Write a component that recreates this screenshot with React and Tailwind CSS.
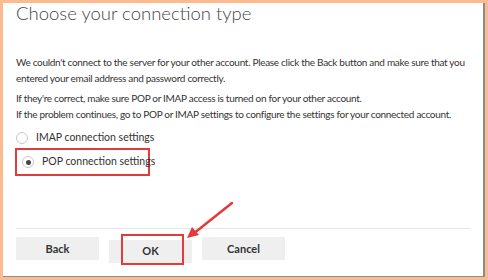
import React from 'react';

const Radio = ({ label, checked }) => (
  <div className="flex items-center h-[24px] whitespace-nowrap">
    <span className="w-[12px] h-[12px] rounded-full border border-[#c8c8c8] bg-white flex items-center justify-center shrink-0">
      {checked && <span className="w-[5px] h-[5px] rounded-full bg-[#444]"></span>}
    </span>
    <span className="ml-[8px] text-[10.5px] text-[#333]">{label}</span>
  </div>
);

const Btn = ({ children }) => (
  <button className="w-[83px] h-[23px] bg-[#efefef] text-[11px] font-bold text-[#333]">
    {children}
  </button>
);

const App = () => {
  return (
    <div className="w-[488px] h-[280px] bg-[#fbbb8f] p-[3px]" style={{ fontFamily: 'Lato, "Noto Sans", sans-serif' }}>
      <div className="relative w-full h-full bg-white border-r-2 border-b border-[#8c8c8c] flex flex-col">
        <h1 className="pl-[13px] text-[18.5px] font-light leading-[24px] text-[#454545] -mt-[2px] whitespace-nowrap">Choose your connection type</h1>

        <div className="pl-[13px] mt-[29px] text-[10px] tracking-[-0.3px] leading-[16px] text-[#333] whitespace-nowrap">
          <p>We couldn't connect to the server for your other account. Please click the Back button and make sure that you<br />entered your email address and password correctly.</p>
          <p className="mt-[4px]">If they're correct, make sure POP or IMAP access is turned on for your other account.<br />If the problem continues, go to POP or IMAP settings to configure the settings for your connected account.</p>
        </div>

        <div className="pl-[13px] mt-[4px]">
          <Radio label="IMAP connection settings" />
          <div className="-ml-[1px] -mt-[2px] w-[135px] h-[28px] border-2 border-[#e23b3b] flex items-center pl-[5px]">
            <Radio label="POP connection settings" checked />
          </div>
        </div>

        <div className="mt-auto mx-[13px] border-t border-[#e6e6e6] pt-[8px] pb-[13px] flex gap-[10px]">
          <Btn>Back</Btn>
          <div className="relative">
            <Btn>OK</Btn>
            <div className="absolute left-[12px] -top-[3px] w-[63px] h-[31px] border-2 border-[#e23b3b]"></div>
          </div>
          <Btn>Cancel</Btn>
        </div>

        <svg className="absolute left-[180px] top-[196px]" width="56" height="46" viewBox="0 0 56 46">
          <line x1="49" y1="4" x2="10" y2="35" stroke="#e33b3b" strokeWidth="2.5" strokeLinecap="round" />
          <polygon points="4,39 9,28 16,36" fill="#e33b3b" />
        </svg>
      </div>
    </div>
  );
};

export default App;
